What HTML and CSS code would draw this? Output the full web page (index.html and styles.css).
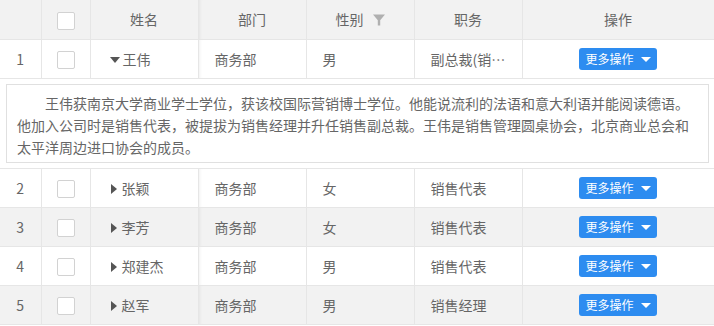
FILE: index.html
```html
<!DOCTYPE html>
<html lang="zh">
<head>
<meta charset="utf-8">
<link rel="stylesheet" href="styles.css">
</head>
<body>
<table class="grid">
  <colgroup>
    <col class="c-num"><col class="c-chk"><col class="c-name"><col class="c-dept"><col class="c-sex"><col class="c-job"><col class="c-op">
  </colgroup>
  <thead>
    <tr>
      <th></th>
      <th><span class="chk"></span></th>
      <th>姓名</th>
      <th class="shadow">部门</th>
      <th>性别<span class="filter"><svg width="12" height="12" viewBox="0 0 12 12"><path d="M0 0.5H12L7.2 6.2V11.5H4.8V6.2Z" fill="#b0b0b0"/></svg></span></th>
      <th>职务</th>
      <th>操作</th>
    </tr>
  </thead>
  <tbody>
    <tr>
      <td class="num">1</td>
      <td class="ctr"><span class="chk"></span></td>
      <td class="name"><span class="tri-down"></span>王伟</td>
      <td class="shadow">商务部</td>
      <td>男</td>
      <td class="ell">副总裁(销售)</td>
      <td class="ctr"><span class="btn">更多操作<span class="caret"></span></span></td>
    </tr>
    <tr class="expand">
      <td colspan="7">
        <div class="detail">王伟获南京大学商业学士学位，获该校国际营销博士学位。他能说流利的法语和意大利语并能阅读德语。他加入公司时是销售代表，被提拔为销售经理并升任销售副总裁。王伟是销售管理圆桌协会，北京商业总会和太平洋周边进口协会的成员。</div>
      </td>
    </tr>
    <tr>
      <td class="num">2</td>
      <td class="ctr"><span class="chk"></span></td>
      <td class="name"><span class="tri-right"></span>张颖</td>
      <td class="shadow">商务部</td>
      <td>女</td>
      <td>销售代表</td>
      <td class="ctr"><span class="btn">更多操作<span class="caret"></span></span></td>
    </tr>
    <tr class="odd">
      <td class="num">3</td>
      <td class="ctr"><span class="chk"></span></td>
      <td class="name"><span class="tri-right"></span>李芳</td>
      <td class="shadow">商务部</td>
      <td>女</td>
      <td>销售代表</td>
      <td class="ctr"><span class="btn">更多操作<span class="caret"></span></span></td>
    </tr>
    <tr>
      <td class="num">4</td>
      <td class="ctr"><span class="chk"></span></td>
      <td class="name"><span class="tri-right"></span>郑建杰</td>
      <td class="shadow">商务部</td>
      <td>男</td>
      <td>销售代表</td>
      <td class="ctr"><span class="btn">更多操作<span class="caret"></span></span></td>
    </tr>
    <tr class="odd">
      <td class="num">5</td>
      <td class="ctr"><span class="chk"></span></td>
      <td class="name"><span class="tri-right"></span>赵军</td>
      <td class="shadow">商务部</td>
      <td>男</td>
      <td>销售经理</td>
      <td class="ctr"><span class="btn">更多操作<span class="caret"></span></span></td>
    </tr>
  </tbody>
</table>
</body>
</html>
```

FILE: styles.css
```css
html, body {
  margin: 0;
  padding: 0;
  background: #fff;
}
body {
  font-family: "Noto Sans CJK SC", "Liberation Sans", sans-serif;
  font-size: 14px;
  color: #666;
}
.grid {
  border-collapse: collapse;
  table-layout: fixed;
  width: 714px;
}
.c-num { width: 41px; }
.c-chk { width: 49px; }
.c-name { width: 108px; }
.c-dept { width: 108px; }
.c-sex { width: 108px; }
.c-job { width: 108px; }
.c-op { width: 192px; }

.grid th, .grid td {
  border: 1px solid #e6e6e6;
  height: 39px;
  padding: 0 15px;
  box-sizing: border-box;
  line-height: 20px;
  vertical-align: middle;
  white-space: nowrap;
}
.grid tr > :first-child { border-left: 0; }
.grid th {
  background: #f2f2f2;
  font-weight: normal;
  text-align: center;
  height: 39px;
  border-top: 0;
}
.grid td { text-align: left; padding-left: 16px; }
.grid td.num, .grid td.ctr { text-align: center; padding: 0; }
.grid th:first-child, .grid th:nth-child(2) { padding: 0; }
.odd td { background: #f2f2f2; }
.shadow { box-shadow: inset 3px 0 3px -2px rgba(0,0,0,0.06); }

.chk {
  display: inline-block;
  width: 16px;
  height: 16px;
  border: 1px solid #d2d2d2;
  border-radius: 2px;
  background: #fff;
  vertical-align: middle;
}
.filter {
  display: inline-block;
  vertical-align: middle;
  margin-left: 9px;
  position: relative;
  top: -1px;
}
.filter svg { display: block; }

.name { padding-left: 19px !important; }
.tri-down {
  display: inline-block;
  width: 0; height: 0;
  border-left: 5px solid transparent;
  border-right: 5px solid transparent;
  border-top: 6px solid #555;
  vertical-align: middle;
  margin-right: 3px;
  position: relative;
  top: -1px;
}
.tri-right {
  display: inline-block;
  width: 0; height: 0;
  border-top: 5px solid transparent;
  border-bottom: 5px solid transparent;
  border-left: 6px solid #555;
  vertical-align: middle;
  margin-right: 5px;
  margin-left: 1px;
  position: relative;
  top: -1px;
}
.ell { overflow: hidden; text-overflow: ellipsis; }

.btn {
  display: inline-flex;
  align-items: center;
  height: 22px;
  padding: 0 6px 0 6px;
  background: #2d8cf0;
  color: #fff;
  font-size: 12px;
  border-radius: 3px;
  line-height: 22px;
  vertical-align: middle;
}
.caret {
  display: inline-block;
  width: 0; height: 0;
  border-left: 5px solid transparent;
  border-right: 5px solid transparent;
  border-top: 5px solid #fff;
  margin-left: 7px;
}

.grid tr.expand td {
  height: 90px;
  padding: 5px 5px 4px 6px;
}
.detail {
  border: 1px solid #e0e0e0;
  padding: 7px 10px;
  line-height: 22px;
  text-indent: 2em;
  white-space: normal;
  height: 79px;
  box-sizing: border-box;
}
```
